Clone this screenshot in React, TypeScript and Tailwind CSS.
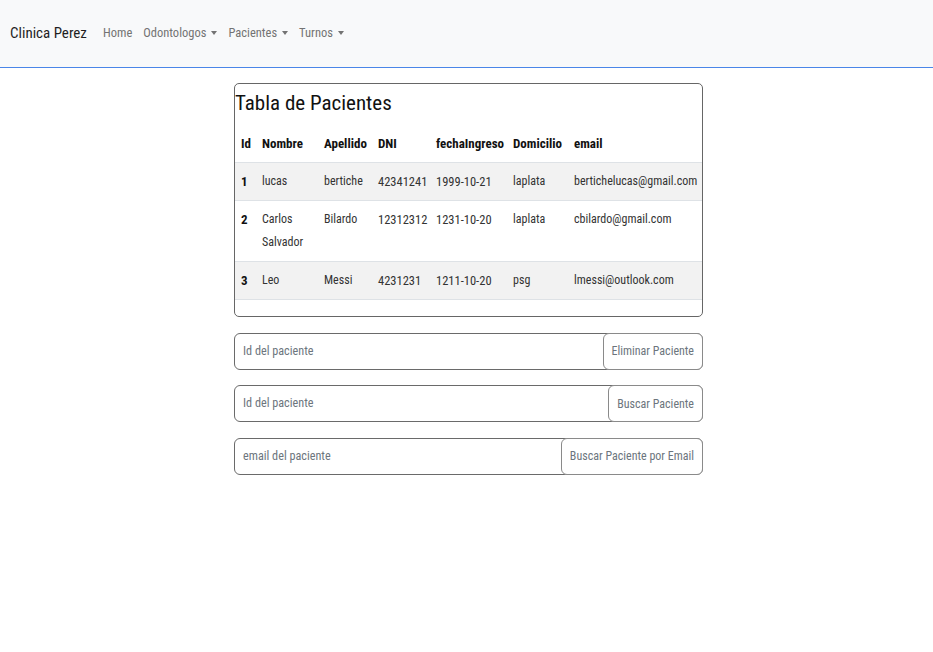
const font = { fontFamily: '"Roboto Condensed", "Noto Sans", "Liberation Sans", sans-serif' };

const pacientes = [
  { id: 1, nombre: "lucas", apellido: "bertiche", dni: "42341241", fecha: "1999-10-21", domicilio: "laplata", email: "bertichelucas@gmail.com" },
  { id: 2, nombre: "Carlos Salvador", apellido: "Bilardo", dni: "12312312", fecha: "1231-10-20", domicilio: "laplata", email: "cbilardo@gmail.com" },
  { id: 3, nombre: "Leo", apellido: "Messi", dni: "4231231", fecha: "1211-10-20", domicilio: "psg", email: "lmessi@outlook.com" },
];

function Caret() {
  return (
    <span className="inline-block ml-[5px] align-[2px] w-0 h-0 border-t-[4px] border-t-current border-x-[3.5px] border-x-transparent" />
  );
}

function Navbar() {
  return (
    <>
      <nav className="h-[67px] bg-[#f8f9fa] flex items-center px-[10px]">
        <a className="text-[15px] text-[#1f1f1f] mr-[11px]">Clinica Perez</a>
        <ul className="flex items-center text-[12.5px] text-[#737373]">
          <li className="px-[5px]">Home</li>
          <li className="px-[6px]">Odontologos<Caret /></li>
          <li className="px-[5px]">Pacientes<Caret /></li>
          <li className="px-[6px]">Turnos<Caret /></li>
        </ul>
      </nav>
      {/* linea azul bajo la navbar */}
      <div className="h-px bg-[#4a86e8]" />
    </>
  );
}

function SearchGroup({ placeholder, label }: { placeholder: string; label: string }) {
  return (
    <div className="flex h-[37px] border border-[#6a6a6a] rounded-[6px] bg-white">
      <input
        className="flex-1 min-w-0 px-[8px] text-[12.2px] font-stretch-condensed outline-none bg-transparent placeholder:text-[#6c757d]"
        style={font}
        placeholder={placeholder}
      />
      <button
        className="-my-px -mr-px px-[8px] border border-[#8a8a8a] rounded-[6px] text-[12px] font-stretch-condensed text-[#6c757d] bg-white"
        style={font}
      >
        {label}
      </button>
    </div>
  );
}

export default function App() {
  return (
    <div className="min-h-screen bg-white text-[#212529] font-stretch-condensed" style={font}>
      <Navbar />

      <main className="w-[469px] ml-[234px] pt-[15px] flex flex-col gap-[15.5px]">
        {/* Tabla */}
        <div className="border border-[#666] rounded-[5px] overflow-hidden pb-[16px]">
          <h2 className="text-[21px] leading-[32px] mt-[3px] mb-[6px] text-[#111]">Tabla de Pacientes</h2>
          <table className="w-full table-fixed border-collapse text-[12px] leading-[23px]">
            <colgroup>
              <col className="w-[21px]" />
              <col className="w-[62px]" />
              <col className="w-[54px]" />
              <col className="w-[58px]" />
              <col className="w-[77px]" />
              <col className="w-[61px]" />
              <col />
            </colgroup>
            <thead>
              <tr className="border-b border-[#dee2e6] font-bold text-[13px] text-[#111]">
                <th className="text-left py-[7px] pl-[6px]">Id</th>
                <th className="text-left py-[7px] pl-[6px]">Nombre</th>
                <th className="text-left py-[7px] pl-[6px]">Apellido</th>
                <th className="text-left py-[7px] pl-[6px]">DNI</th>
                <th className="text-left py-[7px] pl-[6px]">fechaIngreso</th>
                <th className="text-left py-[7px] pl-[6px]">Domicilio</th>
                <th className="text-left py-[7px] pl-[6px]">email</th>
              </tr>
            </thead>
            <tbody>
              {pacientes.map((p, i) => (
                <tr key={p.id} className={`border-b border-[#dee2e6] align-top ${i % 2 === 0 ? "bg-[#f2f2f2]" : "bg-white"}`}>
                  <td className="py-[7px] pl-[6px] font-bold text-[13px] text-[#111]">{p.id}</td>
                  <td className="py-[7px] pl-[6px] pr-[4px] text-[#333]">{p.nombre}</td>
                  <td className="py-[7px] pl-[6px] text-[#333]">{p.apellido}</td>
                  <td className="py-[7px] pl-[6px] text-[12.5px] text-[#333]">{p.dni}</td>
                  <td className="py-[7px] pl-[6px] text-[12.5px] text-[#333]">{p.fecha}</td>
                  <td className="py-[7px] pl-[6px] text-[#333]">{p.domicilio}</td>
                  <td className="py-[7px] pl-[6px] text-[#333] whitespace-nowrap">{p.email}</td>
                </tr>
              ))}
            </tbody>
          </table>
        </div>

        <SearchGroup placeholder="Id del paciente" label="Eliminar Paciente" />
        <SearchGroup placeholder="Id del paciente" label="Buscar Paciente" />
        <SearchGroup placeholder="email del paciente" label="Buscar Paciente por Email" />
      </main>
    </div>
  );
}
